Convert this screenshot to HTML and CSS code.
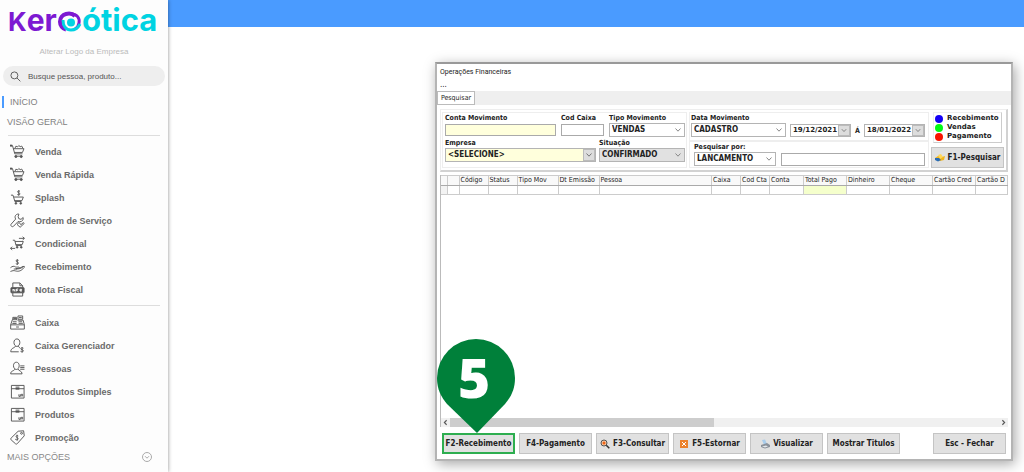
FILE: index.html
```html
<!DOCTYPE html>
<html lang="pt-BR">
<head>
<meta charset="utf-8">
<title>Kero Ótica - Operações Financeiras</title>
<link rel="stylesheet" href="styles.css">
</head>
<body>
<svg class="defs" aria-hidden="true">
  <symbol id="chevron" viewBox="0 0 8 8"><path d="M1.5 2.5 4 5.2 6.5 2.5" fill="none" stroke="currentColor"/></symbol>
  <symbol id="cart" viewBox="0 0 16 16"><path d="M.5 1.8h2.2l2.4 8.7h8.2M3.5 5h11.4l-1.6 4H4.7M5.3 4.5l1-2.2 1.8.8L9.4 1.6l1.4 1.3 1.7-.7 1.2 2.3"/><path d="M5 13h8" /><circle cx="6.3" cy="13.4" r="1.1" class="fill"/><circle cx="12" cy="13.4" r="1.1" class="fill"/><path d="M0 1.7h2.4" class="thick"/></symbol>
  <symbol id="splash" viewBox="0 0 16 16"><path d="M1 5.5h2.2l2 6.8h7M4.2 7.5h10l-1.4 3.8H5"/><circle cx="6.3" cy="14.2" r=".9" class="fill"/><circle cx="11.5" cy="14.2" r=".9" class="fill"/><path d="M10.6 1.4C9.5.6 8 1 8 2s2.6.9 2.6 2.1S9 5.6 7.8 4.8M9.3.2v5.8"/></symbol>
  <symbol id="wrench" viewBox="0 0 16 16"><path d="M9.5 1.2c-2.4-.6-4.8 1.700-3.900 4.200L6 6.500 1.300 11.800c-1.300 1.500.8 3.800 2.500 2.300L8.700 9l1.500.3c2.700.3 4.500-2.200 3.800-4.500L11.700 6.800 9.300 6 8.700 3.700z"/><path d="M7.500 12.200 9.800 10l1.700 2.500 2.800-2.300.8 1-4.300 4z"/></symbol>
  <symbol id="cond" viewBox="0 0 16 16"><path d="M3 4.500h2l1.500 5.700h6M5.300 5.800h8.900L13 9.200H6.300M9.500 2.500h5.700M13.500.8l1.900 1.700-1.900 1.700M.5 13.200h5M2.300 11.400.5 13.200l1.800 1.700"/><circle cx="7.600" cy="12" r=".9" class="fill"/><circle cx="12" cy="12" r=".9" class="fill"/></symbol>
  <symbol id="hand" viewBox="0 0 16 16"><path d="M9.100 1.500C8 .7 6.400 1.100 6.400 2.100s2.700 1 2.700 2.200-1.700 1.500-2.900.7M7.800.2v6"/><path d="M.5 9.300c2-1.700 3.700-2 5.500-.8 1.500.4 3.500-.3 4 .5.300 1-2 1.200-3.800 1.300 3 .8 5.500-.2 8.800-2.700.8.500.500 1-.2 1.800-2.800 3.300-5.600 4.300-9 3.300-2-.7-3-.2-5.300.6"/><path d="M4 10.700h3.500M10 10l4-2.200"/></symbol>
  <symbol id="nfe" viewBox="0 0 16 16"><path d="M3 6V1h7.500L13.500 4v2M3 11.500V15h10.500v-3.500M10.500 1v3h3"/><rect x="1" y="6" width="14" height="5.500" rx=".5" class="fill"/><path d="M3.200 10V7.500l2 2.500V7.500M7 10V7.500h1.800M7 8.800h1.500M12.700 9.600H10.600V7.800h1.800v1h-1.800" class="light"/></symbol>
  <symbol id="register" viewBox="0 0 16 16"><path d="M.7 10.500h14.600v4.500H.7zM.7 10.500 2.500 5h5M8.500 1h5v3.500h-5zM8 5.500h6l1.300 5M3 5V2.500h4V5M3.500 3.700h3M9.500 2.700h3M9 7.200h4M9.200 8.900h4.500M3 7.200h4M2.500 9h4.500M6.500 12.800h3"/></symbol>
  <symbol id="manager" viewBox="0 0 16 16"><path d="M10.500 4.800c0 2.300-1.400 4.200-3.100 4.200S4.200 7.100 4.200 4.800 5.500 1 7.400 1s3.100 1.500 3.100 3.800zM5.700 8.500C5.700 11 .8 10 .8 14.700h8.500M9 8.500c.1 1.200.8 1.600 1.700 2"/><path d="M14.300 10.900c-1.200-.9-2.900-.4-2.900.6s2.900.9 2.900 2.100-1.800 1.500-3.100.6M12.900 9.800v5.700" /></symbol>
  <symbol id="people" viewBox="0 0 16 16"><path d="M9.800 5c0 2.300-1.300 4-3 4S3.700 7.300 3.700 5s1.200-3.700 3.100-3.700S9.800 2.800 9.800 5zM5.100 8.500C5.100 11 .7 9.800.7 13.700h12.200c0-3.500-4-2.900-4.300-5.200"/><path d="M10.900 5.200h4.500M10.900 7h4.500M10.900 8.800h4.500"/></symbol>
  <symbol id="box" viewBox="0 0 16 16"><path d="M1.500 1.500h13.500V15H1.500zM1.500 5h13.500M6 3.300h4M9.500 11V13.200H11V11M12 13.200V11h1.500v2.200"/><path d="M6 5h4" class="thick"/></symbol>
  <symbol id="tag" viewBox="0 0 16 16"><path d="M8.700 1.300 14.500.8l.7 5.400-7.500 8.400c-.6.600-1.300.6-1.900 0L1.200 10.500c-.6-.6-.6-1.300 0-1.900z"/><circle cx="12.300" cy="3.500" r="1"/><path d="M8.800 6.400c-1-1-2.700-.2-2.300.9s2.700 1 2.200 2.300-2.300 1.200-3.200.1M7.500 5l.3 6.200"/></symbol>
</svg>
<div class="app">
  <aside class="sidebar">
    <svg class="logo" viewBox="0 0 152 34" role="img" aria-label="kero ótica">
      <text x="0" y="27" class="logo-purple"><tspan class="logo-cap">K</tspan>er</text>
      <path d="M58 25.500a8 8 0 0 1 0-15.500c4-1 7 0 9 2" fill="none" stroke="#7d19d2" stroke-width="4"/>
      <path d="M63 10c6 0 9 4 8 9-.5 3-2 5-4 6" fill="none" stroke="#7d19d2" stroke-width="3"/>
      <path d="M55 16c0 6 3 10 8 10 4 0 7-2 9-6" fill="none" stroke="#00d3e2" stroke-width="3"/>
      <circle cx="63" cy="18.500" r="4" fill="#00d3e2"/>
      <text x="74" y="27" class="logo-cyan">ótica</text>
    </svg>
    <a class="change-logo" href="#">Alterar Logo da Empresa</a>
    <label class="search">
      <svg viewBox="0 0 12 12"><circle cx="4.800" cy="4.800" r="3.800"/><path d="m7.600 7.600 3.700 3.700"/></svg>
      <input type="search" placeholder="Busque pessoa, produto..." aria-label="Busca">
    </label>
    <nav class="nav">
      <a class="section current" href="#">INÍCIO</a>
      <a class="section" href="#">VISÃO GERAL</a>
      <ul class="menu">
        <li><a href="#"><svg><use href="#cart"/></svg>Venda</a></li>
        <li><a href="#"><svg><use href="#cart"/></svg>Venda Rápida</a></li>
        <li><a href="#"><svg><use href="#splash"/></svg>Splash</a></li>
        <li><a href="#"><svg><use href="#wrench"/></svg>Ordem de Serviço</a></li>
        <li><a href="#"><svg><use href="#cond"/></svg>Condicional</a></li>
        <li><a href="#"><svg><use href="#hand"/></svg>Recebimento</a></li>
        <li><a href="#"><svg><use href="#nfe"/></svg>Nota Fiscal</a></li>
      </ul>
      <ul class="menu">
        <li><a href="#"><svg><use href="#register"/></svg>Caixa</a></li>
        <li><a href="#"><svg><use href="#manager"/></svg>Caixa Gerenciador</a></li>
        <li><a href="#"><svg><use href="#people"/></svg>Pessoas</a></li>
        <li><a href="#"><svg><use href="#box"/></svg>Produtos Simples</a></li>
        <li><a href="#"><svg><use href="#box"/></svg>Produtos</a></li>
        <li><a href="#"><svg><use href="#tag"/></svg>Promoção</a></li>
      </ul>
      <button class="more" type="button">MAIS OPÇÕES
        <svg viewBox="0 0 10 10"><circle cx="5" cy="5" r="4.500"/><path d="M3 4.200 5 6.200l2-2"/></svg>
      </button>
    </nav>
  </aside>

  <div class="content">
    <header class="topbar"></header>
    <main class="workspace">
      <section class="window" aria-label="Operações Financeiras">
        <h1 class="window-title">Operações Financeiras</h1>
        <div class="window-menu">...</div>
        <div class="tabs"><button class="tab" type="button">Pesquisar</button></div>

        <form class="filters">
          <div class="group account">
            <div class="row">
              <label class="field grow">Conta Movimento<input class="box yellow" type="text"></label>
              <label class="field cod">Cod Caixa<input class="box" type="text"></label>
              <label class="field tipo">Tipo Movimento<span class="pick"><select><option>VENDAS</option></select><svg><use href="#chevron"/></svg></span></label>
            </div>
            <div class="row tight">
              <label class="field grow">Empresa<span class="pick yellow drop"><select><option>&lt;SELECIONE&gt;</option></select><svg><use href="#chevron"/></svg></span></label>
              <label class="field situ">Situação<span class="pick gray"><select><option>CONFIRMADO</option></select><svg><use href="#chevron"/></svg></span></label>
            </div>
          </div>
          <div class="search-groups">
            <div class="group dates">
              <label class="field cad">Data Movimento<span class="pick"><select><option>CADASTRO</option></select><svg><use href="#chevron"/></svg></span></label>
              <span class="pick date drop"><input type="text" value="19/12/2021" aria-label="Data inicial"><svg><use href="#chevron"/></svg></span>
              <span class="to">Á</span>
              <span class="pick date drop"><input type="text" value="18/01/2022" aria-label="Data final"><svg><use href="#chevron"/></svg></span>
            </div>
            <div class="group by">
              <label class="field lanc">Pesquisar por:<span class="pick"><select><option>LANCAMENTO</option></select><svg><use href="#chevron"/></svg></span></label>
              <input class="box term" type="text" aria-label="Termo">
            </div>
          </div>
          <div class="side">
            <ul class="legend">
              <li><i class="dot blue"></i>Recebimento</li>
              <li><i class="dot green"></i>Vendas</li>
              <li><i class="dot red"></i>Pagamento</li>
            </ul>
            <button class="btn find" type="button">
              <svg viewBox="0 0 10 10"><path d="M0 5 3 3l4 1 3-1-1 4-4 1-4-1z" fill="#f2b51d"/><path d="m3 2 3-1 2 3-3 2z" fill="#ffd75a"/><path d="M0 5h4l2 2-3 1.500L0 7z" fill="#2a6cb5"/></svg>F1-Pesquisar</button>
          </div>
        </form>

        <div class="results">
          <table>
            <colgroup><col class="w8"><col class="w12"><col class="w28"><col class="w28"><col class="w41"><col class="w41"><col><col class="w28"><col class="w28"><col class="w35"><col class="w43"><col class="w43"><col class="w43"><col class="w43"><col class="w31"></colgroup>
            <thead><tr><th></th><th></th><th>Código</th><th>Status</th><th>Tipo Mov</th><th>Dt Emissão</th><th>Pessoa</th><th>Caixa</th><th>Cod Cta</th><th>Conta</th><th>Total Pago</th><th>Dinheiro</th><th>Cheque</th><th>Cartão Cred</th><th>Cartão D</th></tr></thead>
            <tbody><tr><td class="mark"></td><td></td><td></td><td></td><td></td><td></td><td></td><td></td><td></td><td></td><td class="paid"></td><td></td><td></td><td></td><td></td></tr></tbody>
          </table>
          <div class="scroll">
            <svg viewBox="0 0 8 8"><path d="M5 2 3 4l2 2"/></svg><div class="track"><div class="thumb"></div></div><svg viewBox="0 0 8 8"><path d="m3 2 2 2-2 2"/></svg>
          </div>
        </div>

        <footer class="actions">
          <button class="btn active" type="button">F2-Recebimento</button>
          <button class="btn" type="button">F4-Pagamento</button>
          <button class="btn" type="button"><svg viewBox="0 0 10 10"><circle cx="4" cy="4" r="3" fill="#f7c9a6" stroke="#555"/><circle cx="4" cy="4" r="1.500" fill="#ee6315"/><path d="m6.300 6.300 3 3" stroke="#333" stroke-width="1.500"/></svg>F3-Consultar</button>
          <button class="btn" type="button"><svg viewBox="0 0 10 10"><rect x="1" y="1" width="8" height="8" fill="#ec812b"/><path d="m3 3 4 4M7 3 3 7" stroke="#fff"/></svg>F5-Estornar</button>
          <button class="btn" type="button"><svg viewBox="0 0 10 10"><path d="m2 1 3-.5L7 5 4 6z" fill="#a9cdec"/><path d="m1 6 6-2 3 2v2L5 9.500 1 8z" fill="#8b929b"/><path d="m2 7.500 4-1 2 1-3 1z" fill="#e3e7ea"/></svg>Visualizar</button>
          <button class="btn" type="button">Mostrar Titulos</button>
          <button class="btn close" type="button">Esc - Fechar</button>
        </footer>

        <svg class="pin" viewBox="0 0 78 94" role="img" aria-label="Passo 5">
          <path d="M39 0a39 39 0 0 1 39 39c0 11-4 19-10 26L40 94 10 65C4 58 0 50 0 39A39 39 0 0 1 39 0z"/>
          <text x="37" y="59">5</text>
        </svg>
      </section>
    </main>
  </div>
</div>
</body>
</html>
```
FILE: styles.css
```css
* { box-sizing: border-box; }
body { margin: 0; background: #fff; font-family: "Liberation Sans", Arial, sans-serif; font-size: 9px; color: #6a6a6a; }
ul { list-style: none; margin: 0; padding: 0; }
a { color: inherit; text-decoration: none; }
button, input, select { font: inherit; color: inherit; margin: 0; border-radius: 0; min-width: 0; }
.defs { display: none; }
.app { display: flex; min-height: 100vh; }

/* Sidebar */
.sidebar { width: 168px; flex: none; background: #fdfdfd; box-shadow: 0 0 4px rgba(0, 0, 0, .45); z-index: 1; display: flex; flex-direction: column; }
.logo { width: 152px; height: 34px; margin: 4px 8px 8px; overflow: visible; }
.logo text { font-family: Inter, sans-serif; font-weight: 700; font-size: 31px; }
.logo .logo-cap { font-size: 26px; }
.logo .logo-purple { fill: #7d19d2; font-size: 30px; }
.logo-cyan { fill: #00d3e2; }
.change-logo { text-align: center; font-size: 8px; line-height: 12px; color: #bbb; }
.search { display: flex; align-items: center; gap: 7px; height: 20px; margin: 8px 3px 0; padding: 0 7px; border-radius: 10px; background: #eee; }
.search svg { width: 11px; height: 11px; flex: none; fill: none; stroke: #555; }
.search input { flex: 1; border: 0; padding: 0; background: none; outline: 0; font-size: 8px; }
.search input::placeholder { color: #555; opacity: 1; }
.nav { padding-top: 6px; }
.section { display: block; line-height: 20px; padding-left: 7px; color: #808080; }
.current { line-height: 12px; margin: 4px 0 4px 2px; padding-left: 6px; border-left: 2px solid #4a9bff; }
.menu { margin: 3px 8px 0; padding-top: 4px; border-top: 1px solid #ddd; }
.menu a { display: flex; align-items: center; gap: 10px; height: 23px; padding-left: 2px; font-weight: 700; }
.menu svg { width: 15px; height: 15px; flex: none; }
.menu + .menu { margin-top: 4px; padding-top: 5px; }
symbol { fill: none; stroke: #555; stroke-width: 1; overflow: visible; }
symbol .fill { fill: #555; }
symbol .thick { stroke-width: 2; }
symbol .light { stroke: #fff; }
.more { display: flex; width: 100%; align-items: center; justify-content: space-between; height: 16px; padding: 0 16px 0 7px; border: 0; background: none; color: #888; }
.more svg { width: 10px; height: 10px; fill: none; stroke: #aaa; }

/* Work area */
.content { flex: 1; min-width: 0; display: flex; flex-direction: column; }
.topbar { height: 27px; background: #4a9bff; }
.workspace { flex: 1; display: flex; padding: 35px 11px 11px 267px; }
.window { position: relative; flex: 1; min-width: 0; display: flex; flex-direction: column; border: 2px solid #b4b4b4; border-top-color: #999; background: #fff; box-shadow: 2px 3px 12px rgba(0, 0, 0, .35); font-family: "DejaVu Sans Condensed", "DejaVu Sans", sans-serif; font-size: 8px; color: #222; }
.window-title { margin: 1px 3px 0; font: 400 7px/14px Roboto, sans-serif; }
.window-menu { padding-left: 3px; height: 12px; line-height: 12px; }
.tabs { height: 14px; background: #efefef; display: flex; }
.tab { width: 38px; padding: 0; border: 1px solid #bbb; background: #fff; font-size: 7px; line-height: 11px; white-space: nowrap; }
.filters { display: flex; gap: 2px; margin: 4px 3px 0; padding: 2px 2px 2px 1px; border: 1px solid #eee; border-right: 2px solid #d2d2d2; border-bottom: 2px solid #d2d2d2; font-weight: 700; }
.group { border: 1px solid #eee; padding: 0 3px; }
.account { flex: 1; padding: 0 1px 0 2px; }
.row { display: flex; gap: 5px; }
.tight { gap: 3px; margin-top: 1px; }
.field { display: block; font-size: 7px; line-height: 10px; white-space: nowrap; flex: none; }
.row .grow { flex: 1; min-width: 0; }
.cod { width: 43px; }
.tipo { width: 76px; }
.situ { width: 86px; }
.box { display: block; width: 100%; height: 12px; margin-top: 1px; border: 1px solid #aaa; background: #fff; padding: 0 2px; }
.box.yellow, .yellow { background: #ffffdc; }
.gray { background: #e1e1e1; }
.pick { display: grid; grid-template-columns: 1fr 12px; height: 14px; border: 1px solid #b4b4b4; font-size: 8px; font-weight: 700; line-height: 12px; }
.pick select, .pick input { grid-area: 1 / 1 / 2 / 3; width: 100%; appearance: none; border: 0; padding: 0 2px; background: none; outline: 0; }
.pick svg { grid-area: 1 / 2; width: 8px; height: 8px; place-self: center; color: #888; pointer-events: none; }
.drop svg { width: 12px; height: 100%; padding: 1px; background: #ddd; border: 1px solid #bbb; color: #777; }
.search-groups { display: flex; flex-direction: column; width: 240px; }
.dates { display: flex; align-items: flex-end; gap: 4px; height: 29px; padding: 0 3px 3px 1px; }
.cad { width: 95px; }
.date { flex: 1; height: 13px; font: 700 7px/11px "DejaVu Sans", sans-serif; }
.to { width: 5px; font-size: 7px; line-height: 12px; text-align: center; }
.by { display: flex; align-items: flex-end; gap: 5px; padding: 0 3px 1px 4px; }
.lanc { width: 82px; }
.term { flex: 1; height: 13px; }
.side { width: 73px; display: flex; flex-direction: column; justify-content: space-between; }
.legend { margin: 0 2px; padding: 1px 1px; border: 1px solid #eee; border-right-color: #ccc; border-bottom-color: #ccc; font: 700 7px/9px "DejaVu Sans", sans-serif; }
.legend li { display: flex; align-items: center; gap: 4px; height: 9px; white-space: nowrap; }
.dot { width: 8px; height: 8px; border-radius: 50%; flex: none; }
.blue { background: #1400f5; }
.green { background: #00fa14; }
.red { background: #fa1400; }

/* Results */
.results { flex: 1; display: flex; flex-direction: column; margin: 3px 3px 0; border-left: 1px solid #bbb; overflow: hidden; }
table { width: 100%; table-layout: fixed; border-collapse: collapse; border-top: 1px solid #ccc; }
th, td { height: 9px; padding: 0 0 0 1px; border-right: 1px solid #ccc; border-bottom: 1px solid #ccc; font-size: 7px; font-weight: 400; line-height: 9px; text-align: left; white-space: nowrap; overflow: hidden; }
th { background: #f9f9f9; border-bottom-color: #aaa; }
.mark { background: #f3f3f3; }
.paid { background: #f5ffcc; }
.w8 { width: 6px; } .w12 { width: 12px; } .w28 { width: 29px; } .w41 { width: 41px; } .w35 { width: 34px; } .w43 { width: 43px; } .w31 { width: 32px; }
.scroll { display: flex; align-items: center; height: 9px; margin-top: auto; background: #f0f0f0; }
.scroll svg { width: 9px; height: 9px; fill: none; stroke: #555; }
.track { flex: 1; height: 100%; }
.thumb { width: 48%; height: 100%; background: #cdcdcd; }

/* Buttons */
.btn { display: flex; align-items: center; justify-content: center; gap: 3px; height: 21px; padding: 0; border: 1px solid #c4c4c4; background: #e1e1e1; font-weight: 700; line-height: 10px; white-space: nowrap; color: #222; }
.btn svg { width: 10px; height: 10px; flex: none; }
.actions { display: flex; gap: 4px; padding: 6px 5px 5px; }
.actions .btn { width: 73px; }
.actions .active { border: 2px solid #2eae50; }
.actions .close { margin-left: auto; }
.pin { position: absolute; left: 0; bottom: 26px; width: 78px; height: 94px; }
.pin path { fill: #00803a; }
.pin text { font: 800 55px "Open Sans", sans-serif; fill: #fff; text-anchor: middle; }
```
